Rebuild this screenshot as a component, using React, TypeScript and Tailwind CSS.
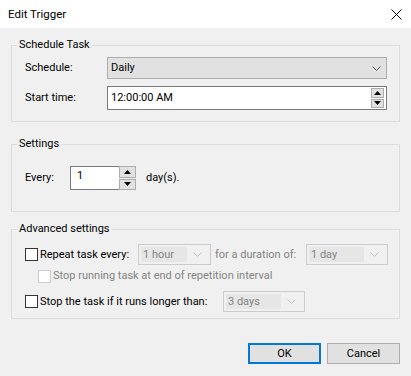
import React from "react";

function Chevron({ disabled }: { disabled?: boolean }) {
  return (
    <svg width="9" height="5" viewBox="0 0 9 5" className="shrink-0">
      <path d="M0.5 0.5 L4.5 4.5 L8.5 0.5" fill="none" stroke={disabled ? "#c4c4c4" : "#555555"} strokeWidth="1" />
    </svg>
  );
}

function Spin({ w, h }: { w: string; h: string }) {
  // up / down buttons of a spin box
  return (
    <div className={`flex flex-col gap-px ${w} ${h}`}>
      <div className="flex-1 border border-[#adadad] bg-[#e1e1e1] flex items-center justify-center">
        <svg width="7" height="4" viewBox="0 0 7 4"><path d="M0 4 L3.5 0 L7 4 Z" fill="#000" /></svg>
      </div>
      <div className="flex-1 border border-[#adadad] bg-[#e1e1e1] flex items-center justify-center">
        <svg width="7" height="4" viewBox="0 0 7 4"><path d="M0 0 L3.5 4 L7 0 Z" fill="#000" /></svg>
      </div>
    </div>
  );
}

function DisabledCombo({ text, w }: { text: string; w: string }) {
  return (
    <div className={`${w} h-[21px] border border-[#cccccc] bg-[#f0f0f0] flex items-center pl-[2px] pr-[8px]`}>
      <span className="flex-1 h-[15px] bg-[#e6e6e6] text-[#838383] leading-[15px] pl-[2px] mr-[6px]">{text}</span>
      <Chevron disabled />
    </div>
  );
}

function Check({ disabled }: { disabled?: boolean }) {
  return (
    <div className={`w-[13px] h-[13px] bg-white border shrink-0 ${disabled ? "border-[#cccccc]" : "border-[#333333]"}`} />
  );
}

export default function App() {
  return (
    <div className="w-[411px] h-[376px] bg-[#f0f0f0] text-[11px] leading-[16px] text-black font-['Roboto','Liberation_Sans',sans-serif]">
      {/* title bar */}
      <div className="h-[28px] bg-white flex items-center justify-between pl-[8px] pr-[9px]">
        <span className="text-[11.5px]">Edit Trigger</span>
        <svg width="11" height="11" viewBox="0 0 11 11">
          <path d="M0.5 0.5 L10.5 10.5 M10.5 0.5 L0.5 10.5" stroke="#000" strokeWidth="1" />
        </svg>
      </div>

      {/* Schedule Task */}
      <fieldset className="mx-[11px] mt-[9px] border border-[#dcdcdc]">
        <legend className="ml-[5px] px-[2px]">Schedule Task</legend>
        <div className="pl-[13px] pt-[4px] pb-[11px] flex flex-col gap-[7px]">
          <div className="flex items-center">
            <span className="w-[82px]">Schedule:</span>
            <div className="w-[280px] h-[22px] border border-[#adadad] bg-[#e1e1e1] flex items-center justify-between pl-[3px] pr-[5px]">
              <span>Daily</span>
              <Chevron />
            </div>
          </div>
          <div className="flex items-center">
            <span className="w-[82px]">Start time:</span>
            <div className="w-[280px] h-[24px] border border-[#7a7a7a] bg-white flex items-center justify-between pl-[3px] pr-[2px]">
              <span>12:00:00 AM</span>
              <Spin w="w-[13px]" h="h-[20px]" />
            </div>
          </div>
        </div>
      </fieldset>

      {/* Settings */}
      <fieldset className="mx-[11px] mt-[14px] border border-[#dcdcdc]">
        <legend className="ml-[5px] px-[2px]">Settings</legend>
        <div className="pl-[13px] pt-[14px] pb-[21px] flex items-center">
          <span className="w-[45px]">Every:</span>
          <div className="flex h-[24px]">
            <div className="w-[49px] border border-[#7a7a7a] border-r-0 bg-white pl-[6px] leading-[18px]">1</div>
            <Spin w="w-[17px]" h="h-[24px]" />
          </div>
          <span className="ml-[10px]">day(s).</span>
        </div>
      </fieldset>

      {/* Advanced settings */}
      <fieldset className="mx-[11px] mt-[9px] border border-[#dcdcdc]">
        <legend className="ml-[5px] px-[2px]">Advanced settings</legend>
        <div className="pl-[13px] pt-[7px] pb-[6px] flex flex-col">
          <div className="flex items-center h-[21px]">
            <Check />
            <span className="ml-[2px] w-[98px]">Repeat task every:</span>
            <DisabledCombo text="1 hour" w="w-[73px]" />
            <span className="ml-[4px] w-[91px] text-[#838383]">for a duration of:</span>
            <DisabledCombo text="1 day" w="w-[82px]" />
          </div>
          <div className="flex items-center mt-[4px] ml-[13px] h-[14px]">
            <Check disabled />
            <span className="ml-[2px] text-[#838383]">Stop running task at end of repetition interval</span>
          </div>
          <div className="flex items-center mt-[8px] h-[21px]">
            <Check />
            <span className="ml-[2px] w-[183px]">Stop the task if it runs longer than:</span>
            <DisabledCombo text="3 days" w="w-[82px]" />
          </div>
        </div>
      </fieldset>

      {/* buttons */}
      <div className="flex justify-end gap-[6px] mt-[24px] mr-[11px]">
        <button className="w-[73px] h-[21px] border-2 border-[#0078d7] bg-[#e1e1e1] leading-none">OK</button>
        <button className="w-[73px] h-[21px] border border-[#adadad] bg-[#e1e1e1] leading-none">Cancel</button>
      </div>
    </div>
  );
}
